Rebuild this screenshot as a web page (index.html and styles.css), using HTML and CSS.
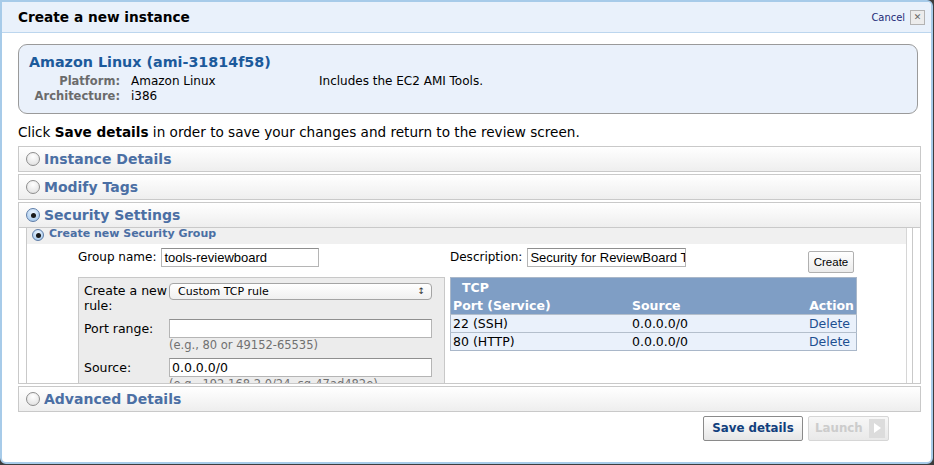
FILE: index.html
```html
<!DOCTYPE html>
<html>
<head>
<meta charset="utf-8">
<link rel="stylesheet" href="styles.css">
</head>
<body>
<div class="modal">
  <div class="hdr">
    <h1 class="title">Create a new instance</h1>
    <div class="cancel"><span class="cancel-t">Cancel</span><span class="xbox">&#x2715;</span></div>
  </div>
  <div class="content">
    <div class="ami">
      <div class="ami-title">Amazon Linux (ami-31814f58)</div>
      <div class="ami-grid">
        <span class="k">Platform:</span><span class="v">Amazon Linux</span><span class="v">Includes the EC2 AMI Tools.</span>
        <span class="k">Architecture:</span><span class="v">i386</span><span></span>
      </div>
    </div>
    <p class="intro">Click <b>Save details</b> in order to save your changes and return to the review screen.</p>

    <div class="sec"><div class="sec-h"><span class="radio"></span>Instance Details</div></div>
    <div class="sec"><div class="sec-h"><span class="radio"></span>Modify Tags</div></div>
    <div class="sec">
      <div class="sec-h"><span class="radio on"></span>Security Settings</div>
      <div class="sec-body">
        <div class="scroll">
          <div class="panel">
            <div class="sub-h"><span class="radio sm on"></span>Create new Security Group</div>
            <div class="sg">
              <div class="row1">
                <div class="fld gname"><label class="lbl">Group name:</label><span class="inp w158">tools-reviewboard</span></div>
                <div class="fld desc"><label class="lbl">Description:</label><span class="inp w159">Security for ReviewBoard T</span><span class="btn-create">Create</span></div>
              </div>
              <div class="row2">
                <div class="rule">
                  <div class="r-lbl">Create a new rule:</div>
                  <div class="r-ctl"><span class="sel">Custom TCP rule<span class="arr">&#x2195;</span></span></div>
                  <div class="r-lbl mid">Port range:</div>
                  <div class="r-ctl"><span class="inp2"></span><span class="hint">(e.g., 80 or 49152-65535)</span></div>
                  <div class="r-lbl mid">Source:</div>
                  <div class="r-ctl"><span class="inp2">0.0.0.0/0</span><span class="hint">(e.g., 192.168.2.0/24, sg-47ad482e)</span></div>
                </div>
                <table class="tcp">
                  <thead>
                    <tr><th colspan="3" class="proto">TCP</th></tr>
                    <tr><th>Port (Service)</th><th>Source</th><th class="act">Action</th></tr>
                  </thead>
                  <tbody>
                    <tr><td>22 (SSH)</td><td>0.0.0.0/0</td><td class="act"><a>Delete</a></td></tr>
                    <tr><td>80 (HTTP)</td><td>0.0.0.0/0</td><td class="act"><a>Delete</a></td></tr>
                  </tbody>
                </table>
              </div>
            </div>
          </div>
        </div>
      </div>
    </div>
    <div class="sec"><div class="sec-h"><span class="radio"></span>Advanced Details</div></div>

    <div class="actions">
      <span class="btn-save">Save details</span>
      <span class="btn-launch">Launch<span class="play"></span></span>
    </div>
  </div>
</div>
</body>
</html>
```
FILE: styles.css
```css
html, body { margin: 0; padding: 0; }
body {
  background: #3c3c3c;
  width: 934px;
  height: 465px;
  overflow: hidden;
  font-family: "DejaVu Sans", Verdana, sans-serif;
  color: #000;
}
.modal {
  width: 929px;
  height: 460px;
  background: #fff;
  border: 2px solid #a7cbe9;
  border-radius: 0 6px 6px 6px;
  overflow: hidden;
}
.hdr {
  height: 30px;
  background: #e9f1fb;
  border-bottom: 1px solid #bcd6ee;
  display: flex;
  align-items: center;
  justify-content: space-between;
  padding: 0 6px 0 16px;
}
.title {
  margin: 0;
  font-size: 13.7px;
  font-weight: bold;
}
.cancel { display: flex; align-items: center; gap: 5px; }
.cancel-t {
  font-family: "DejaVu Sans Condensed", "DejaVu Sans", sans-serif;
  font-size: 11px;
  color: #1d2a78;
}
.xbox {
  width: 13px; height: 13px;
  border: 1px solid #b3b3b3;
  background: #ececec;
  color: #666;
  font-size: 9px;
  line-height: 13px;
  text-align: center;
  font-weight: bold;
}
.content { padding: 11px 10px 0 16px; }
.ami {
  margin-right: 3px;
  height: 54px;
  border: 1px solid #9a9a9a;
  border-radius: 9px;
  background: #eaf1fb;
  padding: 8px 10px 6px 10px;
}
.ami-title {
  color: #1c5a9b;
  font-weight: bold;
  font-size: 14.3px;
  line-height: 18px;
}
.ami-grid {
  margin-top: 3px;
  display: grid;
  grid-template-columns: 91px 177px auto;
  column-gap: 11px;
  font-size: 12px;
  line-height: 15px;
}
.ami-grid .k { text-align: right; font-weight: bold; color: #6b6b6b; font-size: 11.5px; }
.intro {
  margin: 9px 0 5px 0;
  font-size: 13.6px;
  line-height: 18px;
}
.sec {
  border: 1px solid #c9c9c9;
  margin-bottom: 2px;
}
.sec-h {
  height: 24px;
  background: linear-gradient(#ffffff, #eeeeee);
  display: flex;
  align-items: center;
  padding-left: 7px;
  font-weight: bold;
  font-size: 14px;
  color: #4b6fa4;
  gap: 4px;
}
.radio {
  width: 14px; height: 14px;
  border-radius: 50%;
  border: 1px solid #8d8d8d;
  background: radial-gradient(circle at 50% 30%, #fff, #dcdcdc);
  box-sizing: border-box;
  position: relative;
  flex: none;
}
.radio.on {
  border-color: #5e7da8;
  background: radial-gradient(circle at 50% 30%, #eaf4ff, #9cc3ea);
}
.radio.on::after {
  content: "";
  position: absolute;
  width: 5px; height: 5px;
  border-radius: 50%;
  background: #1a1a1a;
  left: 3.5px; top: 3.5px;
}
.radio.sm { width: 12px; height: 12px; margin-top: 1px; }
.radio.sm.on::after { left: 2.5px; top: 2.5px; width: 5px; height: 5px; }
.sec-body {
  border-top: 1px solid #c9c9c9;
  height: 155px;
  padding-left: 7px;
  padding-right: 7px;
  overflow: hidden;
}
.scroll {
  height: 155px;
  border-left: 1px solid #c9c9c9;
  border-right: 1px solid #c9c9c9;
  padding-right: 5px;
  overflow: hidden;
}
.panel {
  height: 155px;
  border-right: 1px solid #d6d6d6;
  background: #fff;
}
.sub-h {
  height: 16px;
  background: #f0f0f0;
  display: flex;
  align-items: flex-start;
  gap: 5px;
  padding-left: 5px;
  font-weight: bold;
  font-size: 11px;
  line-height: 12px;
  color: #4b6fa4;
}
.sg { padding: 4px 0 0 51px; }
.row1 { display: flex; height: 29px; width: 779px; }
.fld { display: flex; align-items: flex-start; }
.gname { width: 372px; flex: none; }
.lbl {
  font-size: 12px;
  line-height: 19px;
  margin-right: 5px;
  color: #000;
}
.inp {
  height: 17px;
  border: 1px solid #b5b5b5;
  border-top-color: #8f8f8f;
  font-family: "Liberation Sans", Arial, sans-serif;
  font-size: 13px;
  line-height: 17px;
  padding-left: 2px;
  white-space: nowrap;
  overflow: hidden;
  box-sizing: content-box;
}
.w158 { width: 154px; }
.w159 { width: 155px; }
.desc { flex: 1; }
.btn-create {
  margin-left: auto;
  margin-right: 3px;
  margin-top: 3px;
  width: 44px;
  height: 20px;
  border: 1px solid #b0b0b0;
  border-radius: 2px;
  background: linear-gradient(#ffffff, #ebebeb);
  font-family: "Liberation Sans", Arial, sans-serif;
  font-size: 11.5px;
  line-height: 20px;
  text-align: center;
}
.row2 { display: flex; gap: 5px; align-items: flex-start; }
.rule {
  height: 140px;
  border: 1px solid #c8c8c8;
  background: #ececec;
  display: grid;
  grid-template-columns: 85px 263px;
  grid-auto-rows: min-content;
  padding: 5px 0 0 5px;
  box-sizing: border-box;
  width: 367px;
  flex: none;
  overflow: hidden;
}
.r-lbl { font-size: 12.5px; line-height: 15px; }
.r-lbl.mid { padding-top: 2px; }
.r-ctl { display: flex; flex-direction: column; margin-bottom: 5px; }
.sel {
  height: 15px;
  border: 1px solid #a4a4a4;
  border-radius: 4px;
  background: linear-gradient(#ffffff, #f0f0f0);
  font-size: 11px;
  line-height: 15px;
  padding-left: 8px;
  position: relative;
  margin-bottom: 14px;
}
.arr {
  position: absolute;
  right: 6px; top: 0;
  font-size: 9px;
  color: #333;
}
.inp2 {
  height: 17px;
  border: 1px solid #b5b5b5;
  border-top-color: #8f8f8f;
  background: #fff;
  font-size: 12.5px;
  line-height: 17px;
  padding-left: 2px;
}
.hint {
  color: #707070;
  font-size: 11.5px;
  line-height: 15px;
  white-space: nowrap;
}
.tcp {
  width: 407px;
  flex: none;
  border-collapse: collapse;
  border: 1px solid #a9b7c9;
  font-size: 12.5px;
}
.tcp th {
  background: #7f9ec5;
  color: #fff;
  font-weight: bold;
  text-align: left;
  padding: 0 2px;
  line-height: 17px;
}
.tcp th.proto { padding-left: 11px; line-height: 19px; }
.tcp td {
  background: #eaf1fb;
  border-top: 1px solid #b4bfcc;
  padding: 0 2px;
  line-height: 17px;
}
.tcp th:nth-child(1), .tcp td:nth-child(1) { width: 175px; }
.tcp .act { text-align: right; }
.tcp td.act { padding-right: 6px; }
.tcp a { color: #1d4f91; }
.actions {
  display: flex;
  justify-content: flex-end;
  gap: 5px;
  margin-top: 4px;
  padding-right: 32px;
}
.btn-save {
  width: 98px;
  height: 23px;
  border: 1px solid #8a8a8a;
  border-radius: 2px;
  background: linear-gradient(#ffffff, #e6e6e6);
  color: #113f7d;
  font-weight: bold;
  font-size: 11.8px;
  line-height: 23px;
  text-align: center;
}
.btn-launch {
  border: 1px solid #d6d6d6;
  border-radius: 2px;
  background: linear-gradient(#f7f7f7, #e9e9e9);
  color: #cccccc;
  font-weight: bold;
  font-size: 11.8px;
  line-height: 23px;
  display: flex;
  align-items: center;
  padding-left: 6px;
  box-sizing: border-box;
  width: 81px;
  height: 25px;
  gap: 6px;
}
.play {
  width: 16px;
  height: 19px;
  background: #dcdcdc;
  position: relative;
}
.play::after {
  content: "";
  position: absolute;
  left: 5px; top: 4px;
  border-left: 7px solid #fff;
  border-top: 5.5px solid transparent;
  border-bottom: 5.5px solid transparent;
}
```
